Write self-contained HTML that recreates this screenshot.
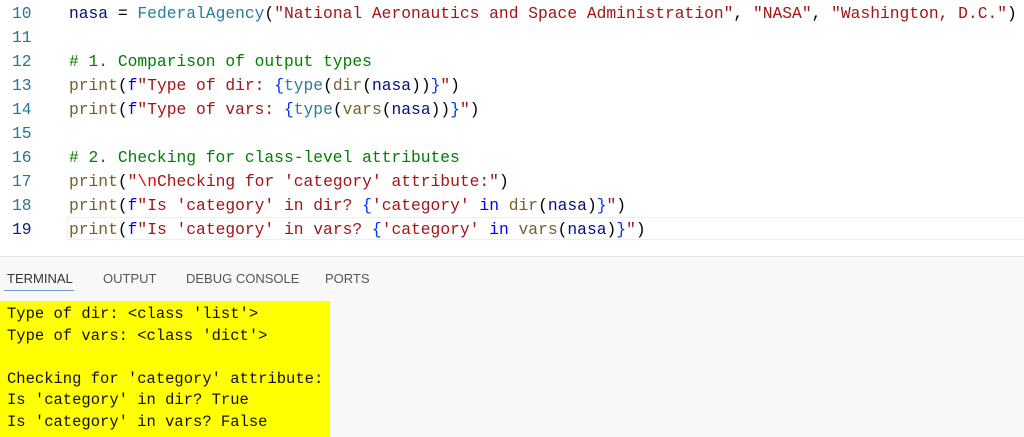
<!DOCTYPE html>
<html><head><style>
body{margin:0;width:1024px;height:436px;overflow:hidden;background:#fff;font-family:"Liberation Mono",monospace;position:relative}
.l{position:absolute;left:0;height:24px;line-height:24px;font-size:16.3px;white-space:pre;width:1024px}
.n{position:absolute;left:12px;color:#237893}
.c{position:absolute;left:69px;color:#000}
.v{color:#001080}.t{color:#267f99}.s{color:#a31515}.m{color:#008000}.f{color:#795e26}.k{color:#0000ff}.p{color:#319331}.b{color:#0431fa}
#cur{position:absolute;left:67px;top:217px;width:957px;height:23px;border:1px solid #eeeeee;border-right:none;box-sizing:border-box}
#panel{position:absolute;left:0;top:256px;width:1024px;height:180px;background:#f8f8f8;border-top:1px solid #e5e5e5}
.tab{position:absolute;top:14px;font-family:"Liberation Sans",sans-serif;font-size:13px;color:#555}
#ul{position:absolute;left:4px;top:33px;width:70px;height:1px;background:#6a9ac9}
#y{position:absolute;left:0;top:44px;width:330px;height:136px;background:#ffff00}
.o{position:absolute;left:7px;font-size:15.5px;line-height:21.5px;white-space:pre;color:#111}
</style></head><body>
<div id="cur"></div>
<div class="l" style="top:2px"><span class="n">10</span><span class="c"><span class="v">nasa</span> = <span class="t">FederalAgency</span>(<span class="s">"National Aeronautics and Space Administration"</span>, <span class="s">"NASA"</span>, <span class="s">"Washington, D.C."</span>)</span></div>
<div class="l" style="top:26px"><span class="n">11</span></div>
<div class="l" style="top:50px"><span class="n">12</span><span class="c m"># 1. Comparison of output types</span></div>
<div class="l" style="top:74px"><span class="n">13</span><span class="c"><span class="f">print</span>(<span class="k">f</span><span class="s">"Type of dir: </span><span class="b">{</span><span class="t">type</span>(<span class="f">dir</span>(<span class="v">nasa</span>))<span class="b">}</span><span class="s">"</span>)</span></div>
<div class="l" style="top:98px"><span class="n">14</span><span class="c"><span class="f">print</span>(<span class="k">f</span><span class="s">"Type of vars: </span><span class="b">{</span><span class="t">type</span>(<span class="f">vars</span>(<span class="v">nasa</span>))<span class="b">}</span><span class="s">"</span>)</span></div>
<div class="l" style="top:122px"><span class="n">15</span></div>
<div class="l" style="top:146px"><span class="n">16</span><span class="c m"># 2. Checking for class-level attributes</span></div>
<div class="l" style="top:170px"><span class="n">17</span><span class="c"><span class="f">print</span>(<span class="s">"<span style="color:#ee0000">\n</span>Checking for 'category' attribute:"</span>)</span></div>
<div class="l" style="top:194px"><span class="n">18</span><span class="c"><span class="f">print</span>(<span class="k">f</span><span class="s">"Is 'category' in dir? </span><span class="b">{</span><span class="s">'category'</span> <span class="k">in</span> <span class="f">dir</span>(<span class="v">nasa</span>)<span class="b">}</span><span class="s">"</span>)</span></div>
<div class="l" style="top:218px"><span class="n" style="color:#0b216f">19</span><span class="c"><span class="f">print</span>(<span class="k">f</span><span class="s">"Is 'category' in vars? </span><span class="b">{</span><span class="s">'category'</span> <span class="k">in</span> <span class="f">vars</span>(<span class="v">nasa</span>)<span class="b">}</span><span class="s">"</span>)</span></div>
<div id="panel">
<span class="tab" style="left:7px;color:#333">TERMINAL</span>
<span class="tab" style="left:103px">OUTPUT</span>
<span class="tab" style="left:186px">DEBUG CONSOLE</span>
<span class="tab" style="left:325px">PORTS</span>
<div id="ul"></div>
<div id="y"></div>
<div class="o" style="top:47px">Type of dir: &lt;class 'list'&gt;
Type of vars: &lt;class 'dict'&gt;

Checking for 'category' attribute:
Is 'category' in dir? True
Is 'category' in vars? False</div>
</div>
</body></html>
